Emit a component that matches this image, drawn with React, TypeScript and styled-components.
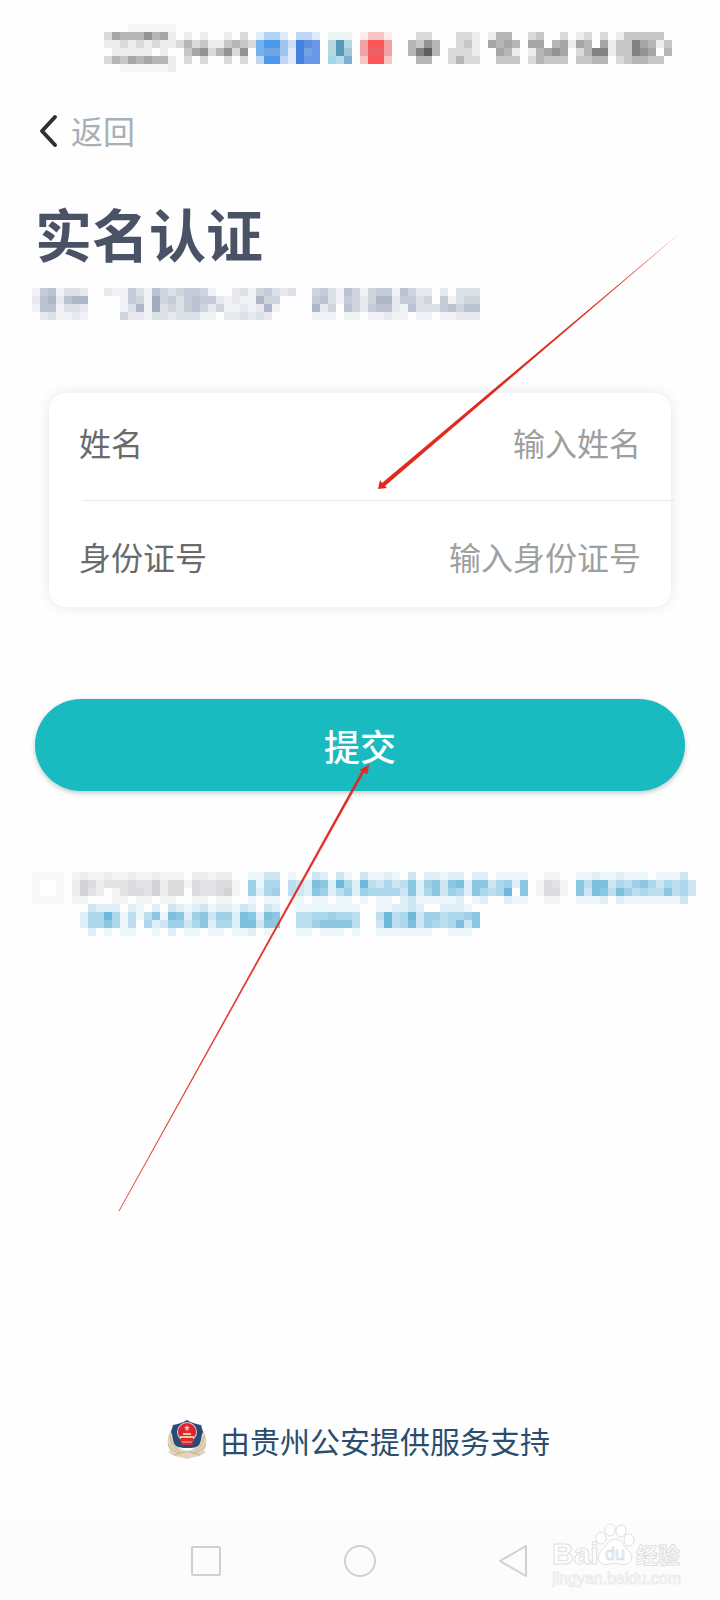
import React from "react";
import styled, { createGlobalStyle } from "styled-components";

const GlobalStyle = createGlobalStyle`
  * { box-sizing: border-box; }
  body {
    margin: 0;
    background: #fefefe;
    font-family: "Noto Sans CJK SC", "Noto Sans", sans-serif;
  }
`;

const CELL = 8;

type Tint = { ink: string; step: number };

const grey: Tint = { ink: "#000000", step: 0.07 };
const slate: Tint = { ink: "#8c98b0", step: 0.1 };
const ash: Tint = { ink: "#a8a6ac", step: 0.1 };
const sky: Tint = { ink: "#5cb0d6", step: 0.1 };

const statusColours: Record<string, string> = {
  "-": "#f6f6f6", a: "#dfecfb", b: "#b0d2f7", c: "#e0eaf9", d: "#c0d6f5", e: "#eef6f5",
  f: "#fdecea", g: "#f7c5c6", h: "#73b1ee", i: "#4f99ec", j: "#a0c4f0", k: "#d0def4",
  l: "#4482e2", m: "#5a90df", n: "#6a97e6", o: "#b6d8de", p: "#589ab8", q: "#f3a2a5",
  r: "#fa5559", s: "#6fa5e2", t: "#a3c6d5", u: "#ee6067", v: "#a0d8e8", w: "#b5dde9", x: "#7facd8",
};

const statusRows = [
  "000------",
  "254446451010100102" + "0" + "abbc0ddc0eee0fggf" + "00" + "022000221014400230020120201333330",
  "112121211242311343" + "2" + "hiijklmn0opo0qrrq" + "00" + "436400231054540550451540513375413",
  "011111010035624626" + "0" + "hssjclsn0opt0quuq" + "00" + "479402221005410145650247713376504",
  "243545441020200202" + "0" + "diidclnn0vwx0grrg" + "00" + "044002422003330243330334402344330",
  "00------1",
];

const subtitleRows = [
  "15613320021153164345541002314532300" + "453164145516422020333",
  "26726770000154184535655212117440000" + "563154247725534051344",
  "16613320000137183435642411212710000" + "724064256621633356466",
  "02311210000422133233311022323200000" + "111011011211011011222",
];

const greyText = [
  "121121121121110221220",
  "254233343352441433441",
  "253201344352440433451",
  "110001101101100110110",
];
const greyAnd = ["0110", "1431", "1441", "0110"];
const firstLink = [
  "113301003203103" + "11210302212202201111",
  "615504328729529" + "43534726737827735627",
  "625604327624626" + "55553725736527545907",
  "101101101101101" + "01102311111201200211",
];
const secondLink = ["112112111011130", "748835467535453", "738748645447453", "111202111111130"];
const thirdLink = [
  "0322202102032123122132032" + "00" + "11111111" + "00" + "1122320022210",
  "2559514147187267366287287" + "00" + "44556554" + "00" + "4945936645567",
  "2557514052366357255288377" + "00" + "44677774" + "00" + "3945836545837",
  "0201011001020110110112010" + "00" + "11011101" + "00" + "1111111001110",
];

type Block = { rows: string[]; col: number; row: number; tint: Tint };

const Cells = ({ rows, col, row, tint }: Block) => (
  <g>
    {rows.flatMap((line, y) =>
      [...line].map((mark, x) => {
        if (mark === "0") return null;
        const level = Number(mark);
        const shaded = !Number.isNaN(level);
        return (
          <rect
            key={`${x}-${y}`}
            x={(col + x) * CELL}
            y={(row + y) * CELL}
            width={CELL}
            height={CELL}
            fill={shaded ? tint.ink : statusColours[mark]}
            opacity={shaded ? level * tint.step : 1}
          />
        );
      })
    )}
  </g>
);

const Mosaic = styled.svg`
  display: block;
  flex: none;
  shape-rendering: crispEdges;
`;

const Screen = styled.div`
  position: relative;
  display: flex;
  flex-direction: column;
  min-height: 100vh;
  overflow: hidden;
`;

const StatusBar = styled.header`
  display: flex;
  justify-content: flex-end;
  padding: 24px 48px 0 0;
`;

const TopBar = styled.nav`
  display: flex;
  align-items: center;
  height: 120px;
  padding: 0 36px 4px;
`;

const BackLink = styled.a`
  display: flex;
  align-items: center;
  gap: 9px;
  color: #a7afb8;
  font-size: 32px;
  line-height: 40px;
  text-decoration: none;
`;

const Content = styled.main`
  padding: 0 35px;
`;

const Title = styled.h1`
  margin: 0;
  color: #4a5265;
  font-size: 57px;
  font-weight: 700;
  line-height: 80px;
`;

const Subtitle = styled.div`
  margin: 16px 0 0 -3px;
`;

const Card = styled.div`
  margin: 73px 14px 0;
  border-radius: 16px;
  background: #fff;
  box-shadow: 0 0 12px rgba(60, 80, 90, 0.13);
`;

const Field = styled.label<{ $divided?: boolean }>`
  display: flex;
  align-items: center;
  height: ${(p) => (p.$divided ? "108px" : "106px")};
  margin-right: ${(p) => (p.$divided ? "-4px" : "0")};
  margin-left: ${(p) => (p.$divided ? "34px" : "0")};
  padding: ${(p) => (p.$divided ? "0 34px 10px 0" : "4px 30px 0 34px")};
  border-bottom: ${(p) => (p.$divided ? "1px solid #e6e7e8" : "none")};
`;

const FieldName = styled.span`
  flex: none;
  margin-left: -4px;
  color: #6a6a6a;
  font-size: 32px;
  line-height: 48px;
`;

const FieldInput = styled.input`
  flex: 1;
  min-width: 0;
  padding: 0;
  border: 0;
  outline: 0;
  background: transparent;
  color: #444;
  font-family: inherit;
  font-size: 32px;
  line-height: 48px;
  text-align: right;
  &::placeholder { color: #9f9f9f; opacity: 1; }
`;

const SubmitButton = styled.button`
  display: block;
  width: 100%;
  height: 92px;
  margin-top: 92px;
  border: 0;
  border-radius: 46px;
  background: #1abac1;
  box-shadow: 0 2px 5px rgba(30, 60, 70, 0.28);
  color: #fff;
  font-family: inherit;
  font-size: 36px;
  font-weight: 500;
  line-height: 48px;
`;

const Agreement = styled.label`
  display: flex;
  align-items: flex-start;
  gap: 8px;
  margin: 81px -24px 0 -3px;
`;

const Checkbox = styled.input`
  appearance: none;
  flex: none;
  width: 32px;
  height: 32px;
  margin: 0;
  border: 8px solid #f8f8f8;
  background: #fff;
`;

const Support = styled.footer`
  display: flex;
  align-items: center;
  justify-content: center;
  gap: 12px;
  height: 40px;
  margin: auto 0 62px;
  padding-right: 4px;
  color: #2a4d6e;
  font-size: 30px;
  line-height: 40px;
`;

const SystemBar = styled.nav`
  position: relative;
  display: flex;
  align-items: center;
  justify-content: center;
  gap: 120px;
  height: 78px;
  background: #fcfcfc;
`;

const SystemButton = styled.button`
  width: 34px;
  height: 34px;
  padding: 0;
  border: 0;
  background: none;
  svg { display: block; }
`;

const Watermark = styled.svg`
  position: absolute;
  right: 32px;
  bottom: 8px;
`;

const Pointers = styled.svg`
  position: absolute;
  top: 0;
  left: 0;
  pointer-events: none;
`;

const Emblem = () => (
  <svg width="42" height="42" viewBox="0 0 42 42" aria-hidden="true">
    <path d="M7 9C1 15 0 25 4 32l-2 1 6 4 6 1 7 2 7-2 6-1 6-4-2-1c4-7 3-17-3-23l-3 18-11 6-11-6z" fill="#e2d5bd" />
    <path d="M4 17c1 7 4 12 10 16M2 25c3 5 7 8 13 10M38 17c-1 7-4 12-10 16M40 25c-3 5-7 8-13 10M8 36l13-4 13 4" fill="none" stroke="#c6b38f" strokeWidth="1" />
    <path d="M21 1c5 3 9 4 14 5l2 7c-2 3-1 8-4 13-3 3-7 3-12 3s-9 0-12-3c-3-5-2-10-4-13l2-7c5-1 9-2 14-5z" fill="#284c79" />
    <circle cx="21" cy="13" r="10" fill="#e8c9c4" />
    <circle cx="21" cy="13" r="9" fill="#dc2530" />
    <path d="m21 6 1 2h2l-2 2 1 2-2-1-2 1 1-2-2-2h2zM14 17h14v2H14zM17 14h8v2h-8z" fill="#f3c29e" />
    <path d="M14 20h14v3l-2 1 1 2H15l1-2-2-1z" fill="#d92b36" />
    <path d="M16 23h10" stroke="#efb199" />
  </svg>
);

export default function App() {
  return (
    <Screen>
      <GlobalStyle />
      <StatusBar>
        <Mosaic width="568" height="48" role="img" aria-label="状态栏">
          <Cells rows={statusRows} col={0} row={0} tint={grey} />
        </Mosaic>
      </StatusBar>

      <TopBar>
        <BackLink href="#back">
          <svg width="26" height="36" viewBox="0 0 26 36" aria-hidden="true">
            <path d="M19 5 6 19l13 14" fill="none" stroke="#303030" strokeWidth="4" strokeLinecap="round" strokeLinejoin="round" />
          </svg>
          返回
        </BackLink>
      </TopBar>

      <Content>
        <Title>实名认证</Title>
        <Subtitle>
          <Mosaic width="448" height="32" aria-hidden="true">
            <Cells rows={subtitleRows} col={0} row={0} tint={slate} />
          </Mosaic>
        </Subtitle>

        <form onSubmit={(e) => e.preventDefault()}>
          <Card>
            <Field $divided htmlFor="name">
              <FieldName>姓名</FieldName>
              <FieldInput id="name" placeholder="输入姓名" />
            </Field>
            <Field htmlFor="idcard">
              <FieldName>身份证号</FieldName>
              <FieldInput id="idcard" placeholder="输入身份证号" />
            </Field>
          </Card>

          <SubmitButton type="submit">提交</SubmitButton>

          <Agreement htmlFor="agree">
            <Checkbox id="agree" type="checkbox" />
            <Mosaic width="624" height="64" role="img" aria-label="服务协议">
              <Cells rows={greyText} col={0} row={0} tint={ash} />
              <Cells rows={firstLink} col={22} row={0} tint={sky} />
              <Cells rows={greyAnd} col={58} row={0} tint={ash} />
              <Cells rows={secondLink} col={63} row={0} tint={sky} />
              <Cells rows={thirdLink} col={1} row={4} tint={sky} />
            </Mosaic>
          </Agreement>
        </form>
      </Content>

      <Support>
        <Emblem />
        <span>由贵州公安提供服务支持</span>
      </Support>

      <SystemBar>
        <SystemButton type="button" aria-label="最近任务">
          <svg width="34" height="34" fill="none" stroke="#d0d0d0" strokeWidth="2">
            <rect x="3" y="3" width="28" height="28" rx="1" />
          </svg>
        </SystemButton>
        <SystemButton type="button" aria-label="主屏幕">
          <svg width="34" height="34" fill="none" stroke="#d0d0d0" strokeWidth="2">
            <circle cx="17" cy="17" r="15" />
          </svg>
        </SystemButton>
        <SystemButton type="button" aria-label="返回上一页">
          <svg width="34" height="34" fill="none" stroke="#d0d0d0" strokeWidth="2" strokeLinejoin="round">
            <path d="M3 17 29 2v30z" />
          </svg>
        </SystemButton>
        <Watermark width="136" height="68" viewBox="0 0 136 68" fill="#fff" stroke="#dfdfdf" strokeWidth="1">
          <g fontFamily="Liberation Sans, sans-serif" fontWeight="700">
            <text x="0" y="40" fontSize="30">Bai</text>
            <path d="M63 15c6 0 8 6 12 10 4 4 6 7 4 11-2 5-6 5-11 4-3-1-7-1-10 0-5 1-9 1-11-4-2-4 0-7 4-11 4-4 6-10 12-10z" />
            <ellipse cx="49" cy="14" rx="5" ry="6" />
            <ellipse cx="58" cy="6" rx="5" ry="6" />
            <ellipse cx="69" cy="7" rx="5" ry="6" transform="rotate(10 69 7)" />
            <ellipse cx="77" cy="16" rx="5" ry="6" />
            <text x="53" y="36" fontSize="18" fontWeight="400">du</text>
          </g>
          <text x="84" y="39" fontSize="22" fontWeight="700" fontFamily="Noto Sans CJK SC, sans-serif">经验</text>
          <text x="0" y="60" fontSize="16" fontFamily="Liberation Sans, sans-serif" stroke="#ececec">jingyan.baidu.com</text>
        </Watermark>
      </SystemBar>

      <Pointers width="720" height="1220" fill="#e02a1f" aria-hidden="true">
        <path d="M680 233 385 486l2 2-9 1 2-9 2 3z" />
        <path d="M119 1211 364 772l3 2 2-9-9 5 2 1z" stroke="#e02a1f" strokeWidth="0.5" />
      </Pointers>
    </Screen>
  );
}
